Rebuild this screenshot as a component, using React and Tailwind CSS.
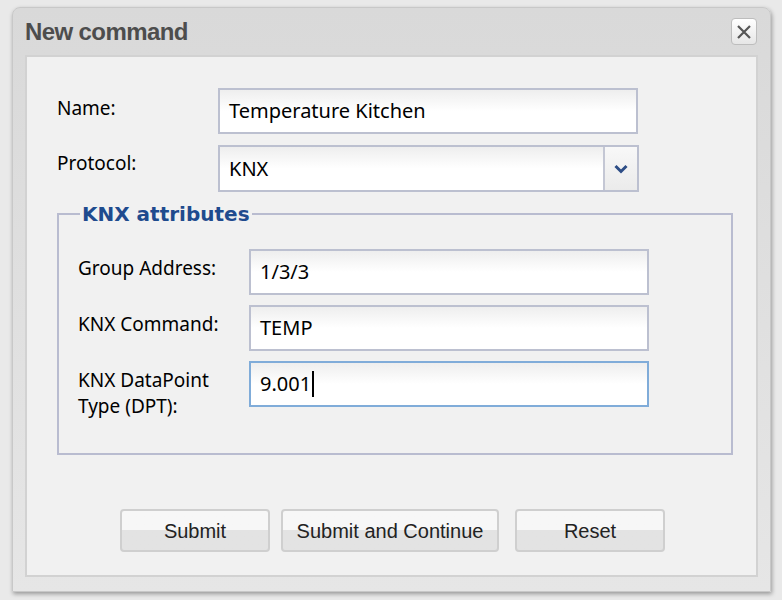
import React from 'react';

const labelFont = { fontFamily: '"Noto Sans", "DejaVu Sans", sans-serif' };

const TextInput = ({ value, focused, caret }) => (
  <div
    className={`flex h-[46px] items-center border-2 px-[9px] text-[20px] text-black ${
      focused ? 'border-[#80acd9]' : 'border-[#bcc0d0]'
    } bg-gradient-to-b from-[#eeeeee] via-white to-white`}
  >
    <span>{value}</span>
    {caret && <span className="ml-[1px] inline-block h-[26px] w-[2px] bg-black" />}
  </div>
);

const Button = ({ children, width }) => (
  <button
    className={`${width} h-[43px] rounded-[4px] border-2 border-[#cfcfcf] bg-gradient-to-b from-[#f7f7f7] from-50% to-[#e3e3e3] to-50% text-[20px] text-[#222]`}
    style={{ fontFamily: '"Liberation Sans", Arial, sans-serif' }}
  >
    {children}
  </button>
);

export default function App() {
  return (
    <div className="h-[600px] w-[782px] bg-[#e9e9e9] pl-[12px] pt-[7px]" style={labelFont}>
      <div className="h-[585px] w-[759px] rounded-t-[8px] border border-[#c8c8c8] bg-gradient-to-b from-[#d9d9d9] to-[#e6e6e6] px-[12px] pb-[12px] shadow-[1px_2px_4px_rgba(0,0,0,0.35)]">
        {/* Title bar */}
        <div className="flex h-[47px] items-center justify-between">
          <span
            className="text-[24px] font-bold tracking-[-0.6px] text-[#4d4d4d]"
            style={{ fontFamily: '"Liberation Sans", Arial, sans-serif' }}
          >
            New command
          </span>
          <div className="mr-[1px] flex h-[27px] w-[26px] items-center justify-center rounded-[4px] border border-[#bdbdbd] bg-gradient-to-b from-white to-[#e6e6e6]">
            <svg width="16" height="16" viewBox="0 0 16 16">
              <path d="M2 2 L14 14 M14 2 L2 14" stroke="#555" strokeWidth="2.2" />
            </svg>
          </div>
        </div>

        {/* Content */}
        <div className="h-[522px] border-2 border-[#d2d2d2] bg-[#f1f1f1] pl-[30px] pr-[24px] pt-[31px]">
          <div className="flex items-start">
            <div className="w-[161px] pt-[6px] text-[19px] text-black">Name:</div>
            <div className="w-[420px]">
              <TextInput value="Temperature Kitchen" />
            </div>
          </div>
          <div className="mt-[11px] flex items-start">
            <div className="w-[161px] pt-[4px] text-[19px] text-black">Protocol:</div>
            <div className="flex h-[47px] w-[421px] border-2 border-[#bcc0d0] bg-white">
              <div className="flex flex-1 items-center bg-gradient-to-b from-[#eeeeee] via-white to-white px-[9px] text-[20px] text-black">
                KNX
              </div>
              <div className="flex w-[34px] items-center justify-center border-l-2 border-[#c4c7d4] bg-gradient-to-b from-[#f8f8f8] to-[#ebebeb]">
                <svg width="14" height="10" viewBox="0 0 14 10">
                  <path d="M1.5 2 L7 7.5 L12.5 2" stroke="#2d4d86" strokeWidth="3" fill="none" />
                </svg>
              </div>
            </div>
          </div>

          {/* Fieldset */}
          <fieldset className="mt-[7px] h-[256px] w-[675px] border-2 border-[#b9bcd0] pl-[19px] pr-[82px]">
            <legend
              className="ml-[2px] px-[2px] text-[20px] font-bold text-[#1f4b8e]"
              style={{ fontFamily: '"DejaVu Sans", Verdana, sans-serif' }}
            >
              KNX attributes
            </legend>
            <div className="mt-[20px] flex items-start">
              <div className="w-[171px] pt-[6px] text-[19px] leading-[26px] text-black">Group Address:</div>
              <div className="w-[400px]">
                <TextInput value="1/3/3" />
              </div>
            </div>
            <div className="mt-[10px] flex items-start">
              <div className="w-[171px] pt-[6px] text-[19px] leading-[26px] text-black">KNX Command:</div>
              <div className="w-[400px]">
                <TextInput value="TEMP" />
              </div>
            </div>
            <div className="mt-[10px] flex items-start">
              <div className="w-[171px] pt-[6px] text-[19px] leading-[26px] text-black">
                KNX DataPoint
                <br />
                Type (DPT):
              </div>
              <div className="w-[400px]">
                <TextInput value="9.001" focused caret />
              </div>
            </div>
          </fieldset>

          {/* Buttons */}
          <div className="mt-[54px] flex pl-[63px]">
            <Button width="w-[150px]">Submit</Button>
            <div className="ml-[11px]">
              <Button width="w-[218px]">Submit and Continue</Button>
            </div>
            <div className="ml-[16px]">
              <Button width="w-[150px]">Reset</Button>
            </div>
          </div>
        </div>
      </div>
    </div>
  );
}
